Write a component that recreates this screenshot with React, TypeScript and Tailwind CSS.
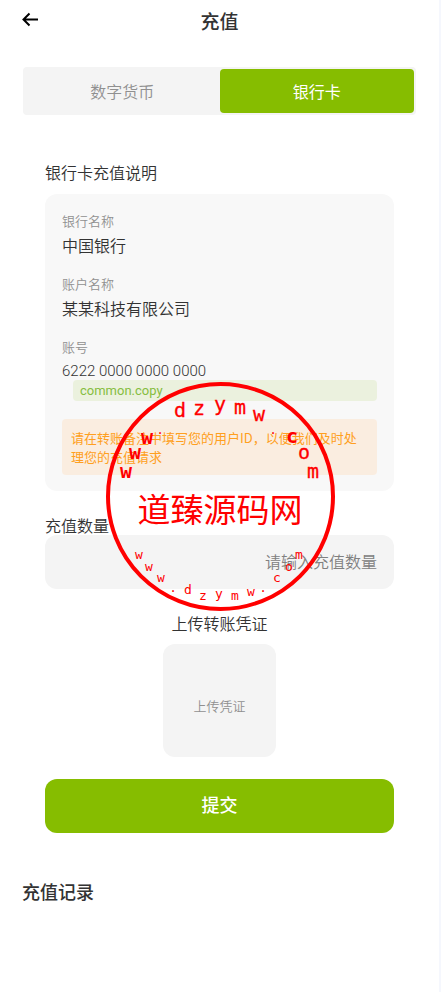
import { useState } from "react"

const tabs = ["数字货币", "银行卡"]

const bankInfo = [
  { label: "银行名称", value: "中国银行", font: "text-base" },
  { label: "账户名称", value: "某某科技有限公司", font: "text-base" },
  { label: "账号", value: "6222 0000 0000 0000", font: "font-[Roboto,sans-serif] text-[15px]" },
]

type Glyph = [char: string, x: number, y: number]

// stamp lettering, x is the middle of the letter and y its baseline
const plainArc: Glyph[] = [
  ["d", 74, 35],
  ["z", 93, 33],
  ["y", 114, 29],
  ["m", 134, 32],
  ["w", 153, 39],
  ["o", 198, 77],
  ["m", 207, 96],
]

const dots: Glyph[] = [
  [".", 167, 52],
  [".", 54, 52],
  [".", 67, 210],
  [".", 157, 210],
]

const boldArc: Glyph[] = [
  ["w", 20, 96],
  ["w", 29, 77],
  ["w", 41, 62],
  ["c", 186, 61],
]

const bottomArc: Glyph[] = [
  ["w", 33, 177],
  ["w", 43, 189],
  ["w", 55, 200],
  ["d", 82, 212],
  ["z", 97, 218],
  ["y", 113, 216],
  ["m", 129, 218],
  ["w", 145, 214],
  ["c", 171, 200],
  ["o", 183, 189],
  ["m", 193, 177],
]

const Letters = ({ items, className }: { items: Glyph[]; className: string }) => (
  <g className={className}>
    {items.map(([char, x, y], index) => (
      <text key={index} x={x} y={y}>
        {char}
      </text>
    ))}
  </g>
)

const Stamp = () => (
  <svg
    viewBox="0 0 229 229"
    textAnchor="middle"
    fill="#ff0000"
    className="pointer-events-none absolute inset-x-0 top-[382px] mx-auto h-[229px] w-[229px] translate-x-px font-['DejaVu_Sans_Mono',monospace] font-normal"
  >
    <circle cx="114.5" cy="114.5" r="112.5" fill="none" stroke="#ff0000" strokeWidth="4" />
    <Letters items={plainArc} className="stroke-[#ff0000] stroke-[0.3px] text-[20px]" />
    <Letters items={boldArc} className="text-[20px] font-bold" />
    <Letters items={bottomArc} className="text-[13px]" />
    <Letters items={dots} className="text-[12px]" />
    <text x="114" y="140" className="font-['Noto_Sans_CJK_SC',sans-serif] text-[33px]">
      道臻源码网
    </text>
  </svg>
)

const BackButton = () => (
  <button type="button" aria-label="返回" className="absolute left-[22px] top-[11px]">
    <svg width="17" height="17" viewBox="0 0 17 17" fill="none" stroke="#000" strokeWidth="2">
      <path d="M16 8.5H2M7.5 2.5L1.5 8.5L7.5 14.5" />
    </svg>
  </button>
)

export default function App() {
  const [activeTab, setActiveTab] = useState("银行卡")
  const [amount, setAmount] = useState("")

  return (
    <div className="relative min-h-screen border-r-2 border-[#f5f7fd] bg-white font-['Noto_Sans_CJK_SC',sans-serif] font-[350] text-[#333]">
      <header className="relative flex h-[42px] items-center justify-center">
        <BackButton />
        <h1 className="text-[19px] font-medium">充值</h1>
      </header>

      <div className="mx-[23px] mt-[25px] flex h-12 rounded bg-[#f4f4f4] p-[2px]">
        {tabs.map((tab) => (
          <button
            key={tab}
            type="button"
            onClick={() => setActiveTab(tab)}
            className={
              activeTab === tab
                ? "flex-1 rounded bg-[#86bd00] text-base font-normal text-white"
                : "flex-1 rounded text-base text-[#909090]"
            }
          >
            {tab}
          </button>
        ))}
      </div>

      <main className="px-[45px] pt-[45px]">
        <h2 className="text-base leading-6">银行卡充值说明</h2>

        <section className="mt-[10px] rounded-xl bg-[#f8f8f8] px-[17px] pb-4 pt-[17px]">
          <dl className="flex flex-col gap-5">
            {bankInfo.map(({ label, value, font }) => (
              <div key={label}>
                <dt className="text-[13px] leading-5 text-[#909090]">{label}</dt>
                <dd className={`mt-[5px] leading-[18px] ${font}`}>{value}</dd>
              </div>
            ))}
          </dl>
          <button
            type="button"
            className="ml-[11px] block w-[calc(100%-11px)] rounded bg-[#ebf1de] px-[7px] text-left font-[Roboto,sans-serif] text-[13px] font-normal leading-[21px] text-[#86bd3f]"
          >
            common.copy
          </button>
          <p className="mt-[18px] rounded bg-[#faede0] px-[9px] py-[9px] text-[13px] font-normal leading-[19px] text-[#ff9f20]">
            请在转账备注中填写您的用户ID，以便我们及时处理您的充值请求
          </p>
        </section>

        <label htmlFor="amount" className="mt-6 block text-base leading-5">
          充值数量
        </label>
        <input
          id="amount"
          value={amount}
          onChange={(e) => setAmount(e.target.value)}
          placeholder="请输入充值数量"
          className="block h-[54px] w-full rounded-xl bg-[#f4f4f4] px-[17px] pb-[2px] text-right text-base outline-none placeholder:text-[#808080]"
        />

        <h2 className="mt-[22px] text-center text-base leading-6">上传转账凭证</h2>
        <button
          type="button"
          className="mx-auto mt-[9px] flex h-[113px] w-[113px] items-center justify-center rounded-xl bg-[#f4f4f4] pt-[10px] text-[13px] text-[#909090]"
        >
          上传凭证
        </button>

        <button
          type="submit"
          className="mt-[22px] block h-[54px] w-full rounded-xl bg-[#86bd00] pb-[5px] text-lg font-medium text-white"
        >
          提交
        </button>
      </main>

      <h2 className="mt-11 px-[22px] text-lg font-medium">充值记录</h2>

      <Stamp />
    </div>
  )
}
